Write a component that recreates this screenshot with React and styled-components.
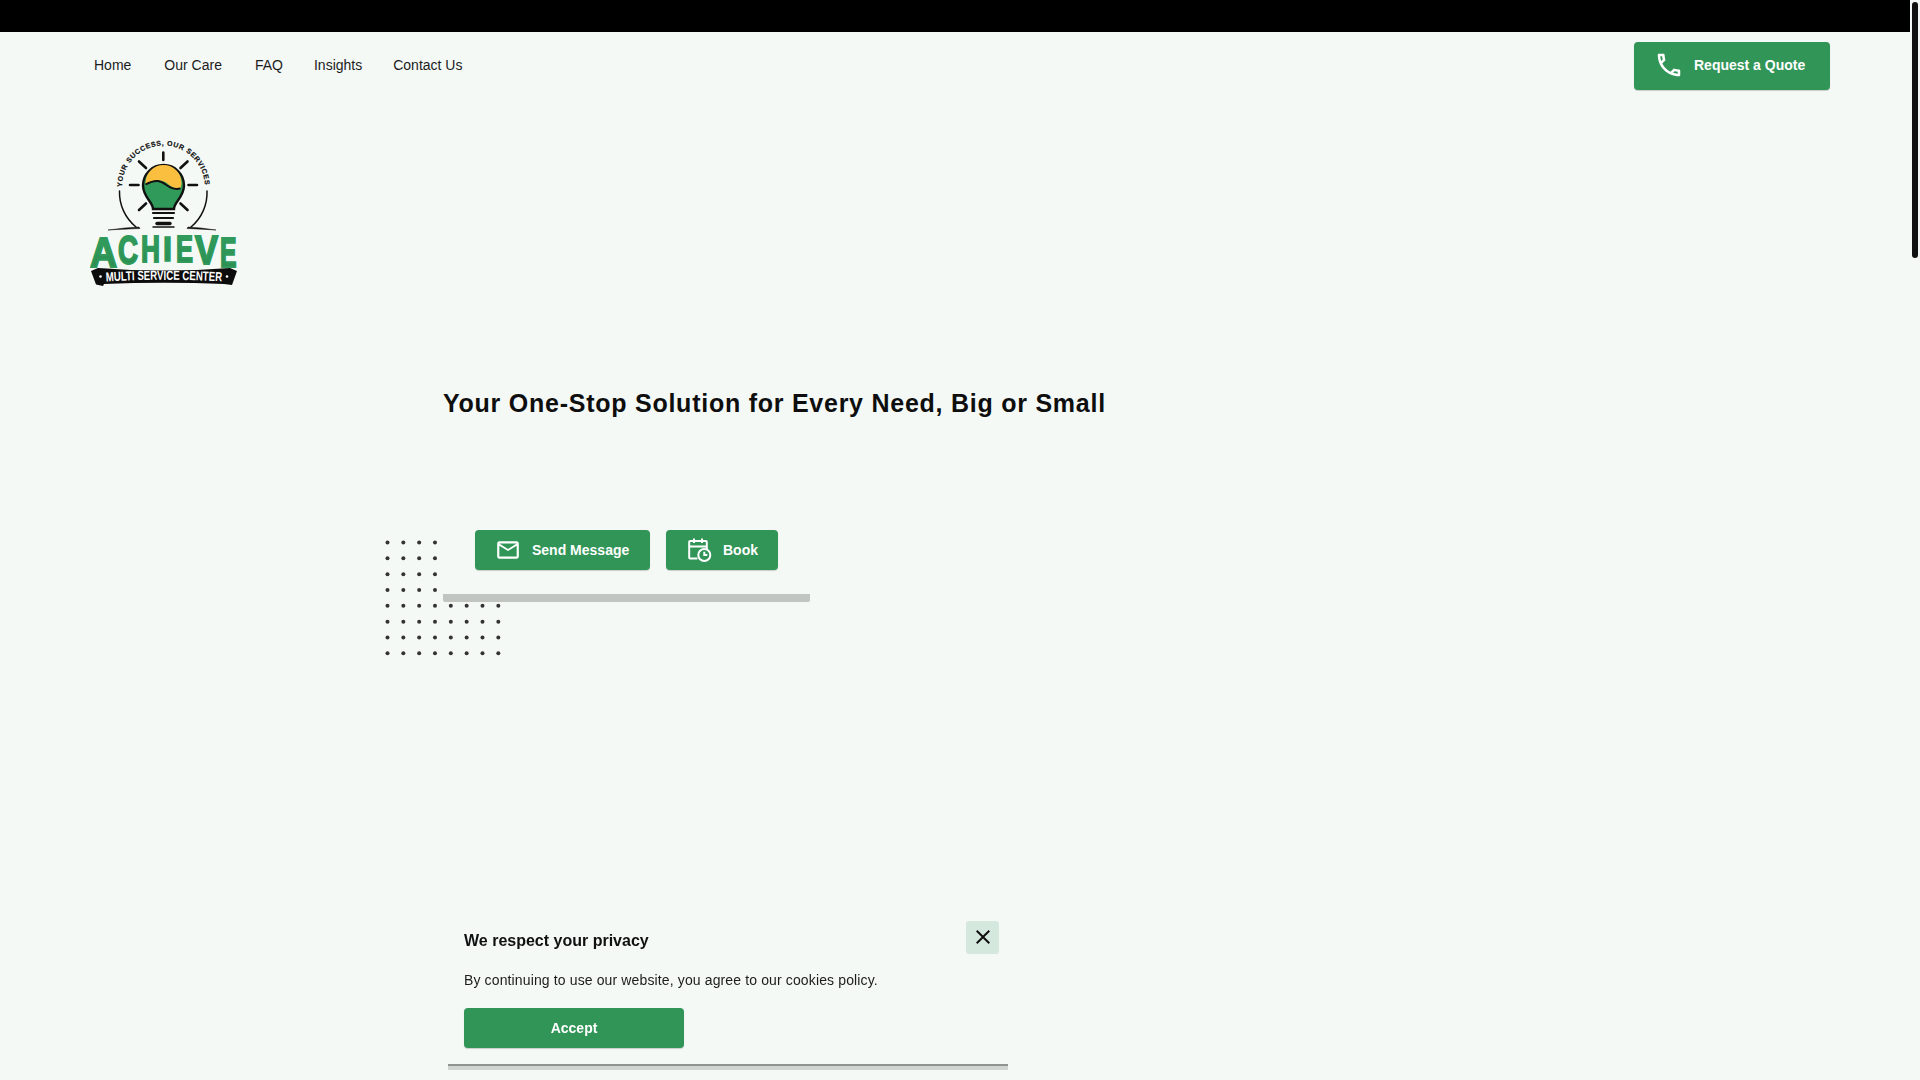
import React from "react";
import styled, { createGlobalStyle } from "styled-components";
import { MdOutlineCall, MdMailOutline, MdClose } from "react-icons/md";

const GlobalStyle = createGlobalStyle`
  html, body {
    margin: 0;
    padding: 0;
    background: #f4f9f6;
    overflow: hidden;
  }
  * { box-sizing: border-box; }
`;

const Page = styled.div`
  width: 1910px;
  height: 1080px;
  font-family: "Liberation Sans", Arial, sans-serif;
  color: #161616;
`;

const TopBar = styled.div`
  height: 32px;
  background: #000;
`;

const ScrollThumb = styled.div`
  position: fixed;
  top: 2px;
  left: 1912px;
  width: 6px;
  height: 256px;
  border-radius: 3px;
  background: #111;
`;

const Header = styled.header`
  display: flex;
  justify-content: space-between;
  align-items: center;
  height: 68px;
  padding: 0 80px 0 94px;
`;

const Nav = styled.nav`
  display: flex;
`;

const NavLink = styled.a`
  font-size: 14px;
  line-height: 18px;
  color: #1c1c1c;
  margin-top: -2px;
  margin-right: ${(p) => p.$gap}px;
`;

const GreenButton = styled.button`
  display: inline-flex;
  align-items: center;
  justify-content: ${(p) => (p.$center ? "center" : "flex-start")};
  height: ${(p) => p.$height || 40}px;
  width: ${(p) => p.$width}px;
  padding: 0 0 ${(p) => p.$lift || 0}px ${(p) => p.$pad || 0}px;
  gap: ${(p) => p.$gap || 12}px;
  border: 0;
  border-radius: 4px;
  background: #319558;
  color: #fff;
  font-family: inherit;
  font-size: 14px;
  font-weight: 700;
  box-shadow: 0 1px 1px rgba(0, 0, 0, 0.18);
`;

const LogoWrap = styled.div`
  width: 150px;
  height: 150px;
  margin: 38px 0 0 90px;
`;

const Hero = styled.section`
  position: relative;
  margin-left: 443px;
  width: 720px;
`;

const Heading = styled.h1`
  margin: 100px 0 0;
  font-size: 25px;
  line-height: 30px;
  font-weight: 700;
  letter-spacing: 0.75px;
  white-space: nowrap;
  color: #0e0e0e;
`;

const Actions = styled.div`
  position: relative;
  display: flex;
  gap: 16px;
  margin: 112px 0 0 32px;
`;

const Rule = styled.div`
  position: relative;
  width: 367px;
  height: 8px;
  margin-top: 24px;
  background: #c0c5c0;
  border-radius: 0 0 2px 2px;
`;

const Dots = styled.svg`
  position: absolute;
  left: -58px;
  top: 152px;
`;

const CookieCard = styled.aside`
  position: fixed;
  left: 448px;
  bottom: 14px;
  width: 560px;
  padding: 0 9px 16px 16px;
  border-bottom: 2px solid #8f9491;
  box-shadow: 0 4px 0 #d0d5d2;
`;

const CookieTop = styled.div`
  display: flex;
  justify-content: space-between;
  align-items: flex-start;
`;

const CookieTitle = styled.h2`
  margin: 11px 0 0;
  font-size: 16px;
  line-height: 18px;
  font-weight: 700;
  color: #111;
`;

const CloseButton = styled.button`
  display: flex;
  align-items: center;
  justify-content: center;
  width: 33px;
  height: 33px;
  padding: 0 0 1px;
  border: 0;
  border-radius: 3px;
  background: #d5e8dd;
  color: #111;
  font-size: 24px;
`;

const CookieText = styled.p`
  margin: 17px 0 19px;
  font-size: 14px;
  line-height: 18px;
  letter-spacing: 0.13px;
  color: #1c1c1c;
`;

const BookIcon = () => (
  <svg width="24" height="24" viewBox="0 0 24 24" fill="none" stroke="#fff" strokeWidth="2">
    <path d="M9.5 20.5H2.2a1 1 0 0 1-1-1V4a1 1 0 0 1 1-1h15.6a1 1 0 0 1 1 1v7.5" />
    <path d="M1.2 8.4h17.6M6 .5v4.6M14 .5v4.6" />
    <circle cx="16.3" cy="17" r="6" />
    <path d="M16.3 13.8V17h3" />
  </svg>
);

const logoLetters = [
  { c: "A", x: 30, w: 27, b: 146.5 },
  { c: "C", x: 58, w: 20, b: 144 },
  { c: "H", x: 81, w: 19, b: 141.5 },
  { c: "I", x: 103, w: 9, b: 140.5 },
  { c: "E", x: 116, w: 17, b: 141.5 },
  { c: "V", x: 135, w: 23, b: 144 },
  { c: "E", x: 160, w: 16.5, b: 146.5 },
];

const Logo = () => (
  <svg width="150" height="150" viewBox="30 18 150 150">
    <defs>
      <linearGradient id="achieveFill" x1="0" y1="0" x2="0" y2="1">
        <stop offset="0" stopColor="#34a061" />
        <stop offset="1" stopColor="#2a8a50" />
      </linearGradient>
      <path id="ringPath" d="M62 67 A41.5 41.5 0 0 1 145 67" />
      <path id="ribbonPath" d="M46 161.5 Q104 158 163 161.5" />
    </defs>
    <text fontFamily="Liberation Sans" fontSize="7" fontWeight="700" fill="#111" stroke="#111" strokeWidth="0.2">
      <textPath href="#ringPath" textLength="128" lengthAdjust="spacing">YOUR SUCCESS, OUR SERVICES</textPath>
    </text>
    <path d="M59.5 71 A44.5 44.5 0 0 0 76 107" fill="none" stroke="#111" strokeWidth="1.5" strokeLinecap="round" />
    <path d="M147 71 A44.5 44.5 0 0 1 131 107" fill="none" stroke="#111" strokeWidth="1.5" strokeLinecap="round" />
    <path d="M48 110 Q66 107.5 79 107 L80 108.5 Q66 109 48 110Z M156 110 Q140 107.5 128 107 L127 108.5 Q140 109 156 110Z" fill="#111" stroke="#111" strokeWidth="0.5" />
    <g stroke="#111" strokeWidth="2.6" strokeLinecap="round">
      <path d="M103.3 32.5v7.5M79 41.5l7 6.5M127.5 41.5l-7 6.5M70 65h8.5M128.5 65h8.5M79 90l7-6.5M127.5 90l-7-6.5" />
    </g>
    <path d="M93 89 C93 82 83 77 83 65.5 A20.3 20.3 0 0 1 124 65.5 C124 77 114 82 114 89Z" fill="#2f9a5a" stroke="#111" strokeWidth="2.4" />
    <path d="M85.5 63 A18 18 0 0 1 121.5 63 C121.5 65 121 67 120 68.5 C111 71 107 58 96 61 C91 62.5 88 63 85.5 64Z" fill="#fbbf40" />
    <path d="M85.5 64.5 C90 62 94 60.5 98 61 C106 62 109 71 120.5 68.5" fill="none" stroke="#111" strokeWidth="2" />
    <g stroke="#111" strokeLinecap="round">
      <path d="M93 93h21M94 98h19" strokeWidth="2.2" />
      <path d="M97 103.5h13" strokeWidth="3.4" />
      <path d="M93 107h21" strokeWidth="1.5" />
    </g>
    {logoLetters.map((l, i) => (
      <text
        key={i}
        transform={`translate(${l.x} ${l.b}) scale(1 ${(l.b - 115) / 24})`}
        fontFamily="Liberation Sans"
        fontWeight="700"
        fontSize="33"
        fill="url(#achieveFill)"
        stroke="#2f9a5a"
        strokeWidth="1.6"
        textLength={l.w}
        lengthAdjust="spacingAndGlyphs"
      >
        {l.c}
      </text>
    ))}
    <path d="M31 151 L38 148 Q104 153 170 148 L177 151 L172 165 L164 164 Q104 161.5 44 164 L43 166 L36 164.5Z" fill="#0c0c0c" />
    <circle cx="40.5" cy="156.5" r="1.3" fill="#fff" />
    <circle cx="167" cy="156.5" r="1.3" fill="#fff" />
    <text fontFamily="Liberation Sans" fontSize="13" fontWeight="700" fill="#fff">
      <textPath href="#ribbonPath" textLength="116" lengthAdjust="spacingAndGlyphs">MULTI SERVICE CENTER</textPath>
    </text>
  </svg>
);

const dotPitch = 15.83;
const dotList = [];
for (let r = 0; r < 8; r++) {
  for (let c = 0; c < (r < 4 ? 4 : 8); c++) {
    dotList.push([2.5 + c * dotPitch, 2.5 + r * dotPitch]);
  }
}

export default function App() {
  return (
    <Page>
      <GlobalStyle />
      <TopBar />
      <ScrollThumb />
      <Header>
        <Nav>
          <NavLink $gap={33}>Home</NavLink>
          <NavLink $gap={33}>Our Care</NavLink>
          <NavLink $gap={31}>FAQ</NavLink>
          <NavLink $gap={31}>Insights</NavLink>
          <NavLink>Contact Us</NavLink>
        </Nav>
        <GreenButton $width={196} $height={48} $pad={20} $gap={10} $lift={2}>
          <MdOutlineCall size={30} />
          Request a Quote
        </GreenButton>
      </Header>
      <LogoWrap>
        <Logo />
      </LogoWrap>
      <Hero>
        <Heading>Your One-Stop Solution for Every Need, Big or Small</Heading>
        <Dots width="116" height="116">
          {dotList.map(([x, y], i) => (
            <circle key={i} cx={x} cy={y} r="2" fill="#333" />
          ))}
        </Dots>
        <Actions>
          <GreenButton $width={175} $pad={20} $gap={11}>
            <MdMailOutline size={26} />
            Send Message
          </GreenButton>
          <GreenButton $width={112} $pad={22} $gap={11}>
            <BookIcon />
            Book
          </GreenButton>
        </Actions>
        <Rule />
      </Hero>
      <CookieCard>
        <CookieTop>
          <CookieTitle>We respect your privacy</CookieTitle>
          <CloseButton>
            <MdClose />
          </CloseButton>
        </CookieTop>
        <CookieText>By continuing to use our website, you agree to our cookies policy.</CookieText>
        <GreenButton $width={220} $center>
          Accept
        </GreenButton>
      </CookieCard>
    </Page>
  );
}
